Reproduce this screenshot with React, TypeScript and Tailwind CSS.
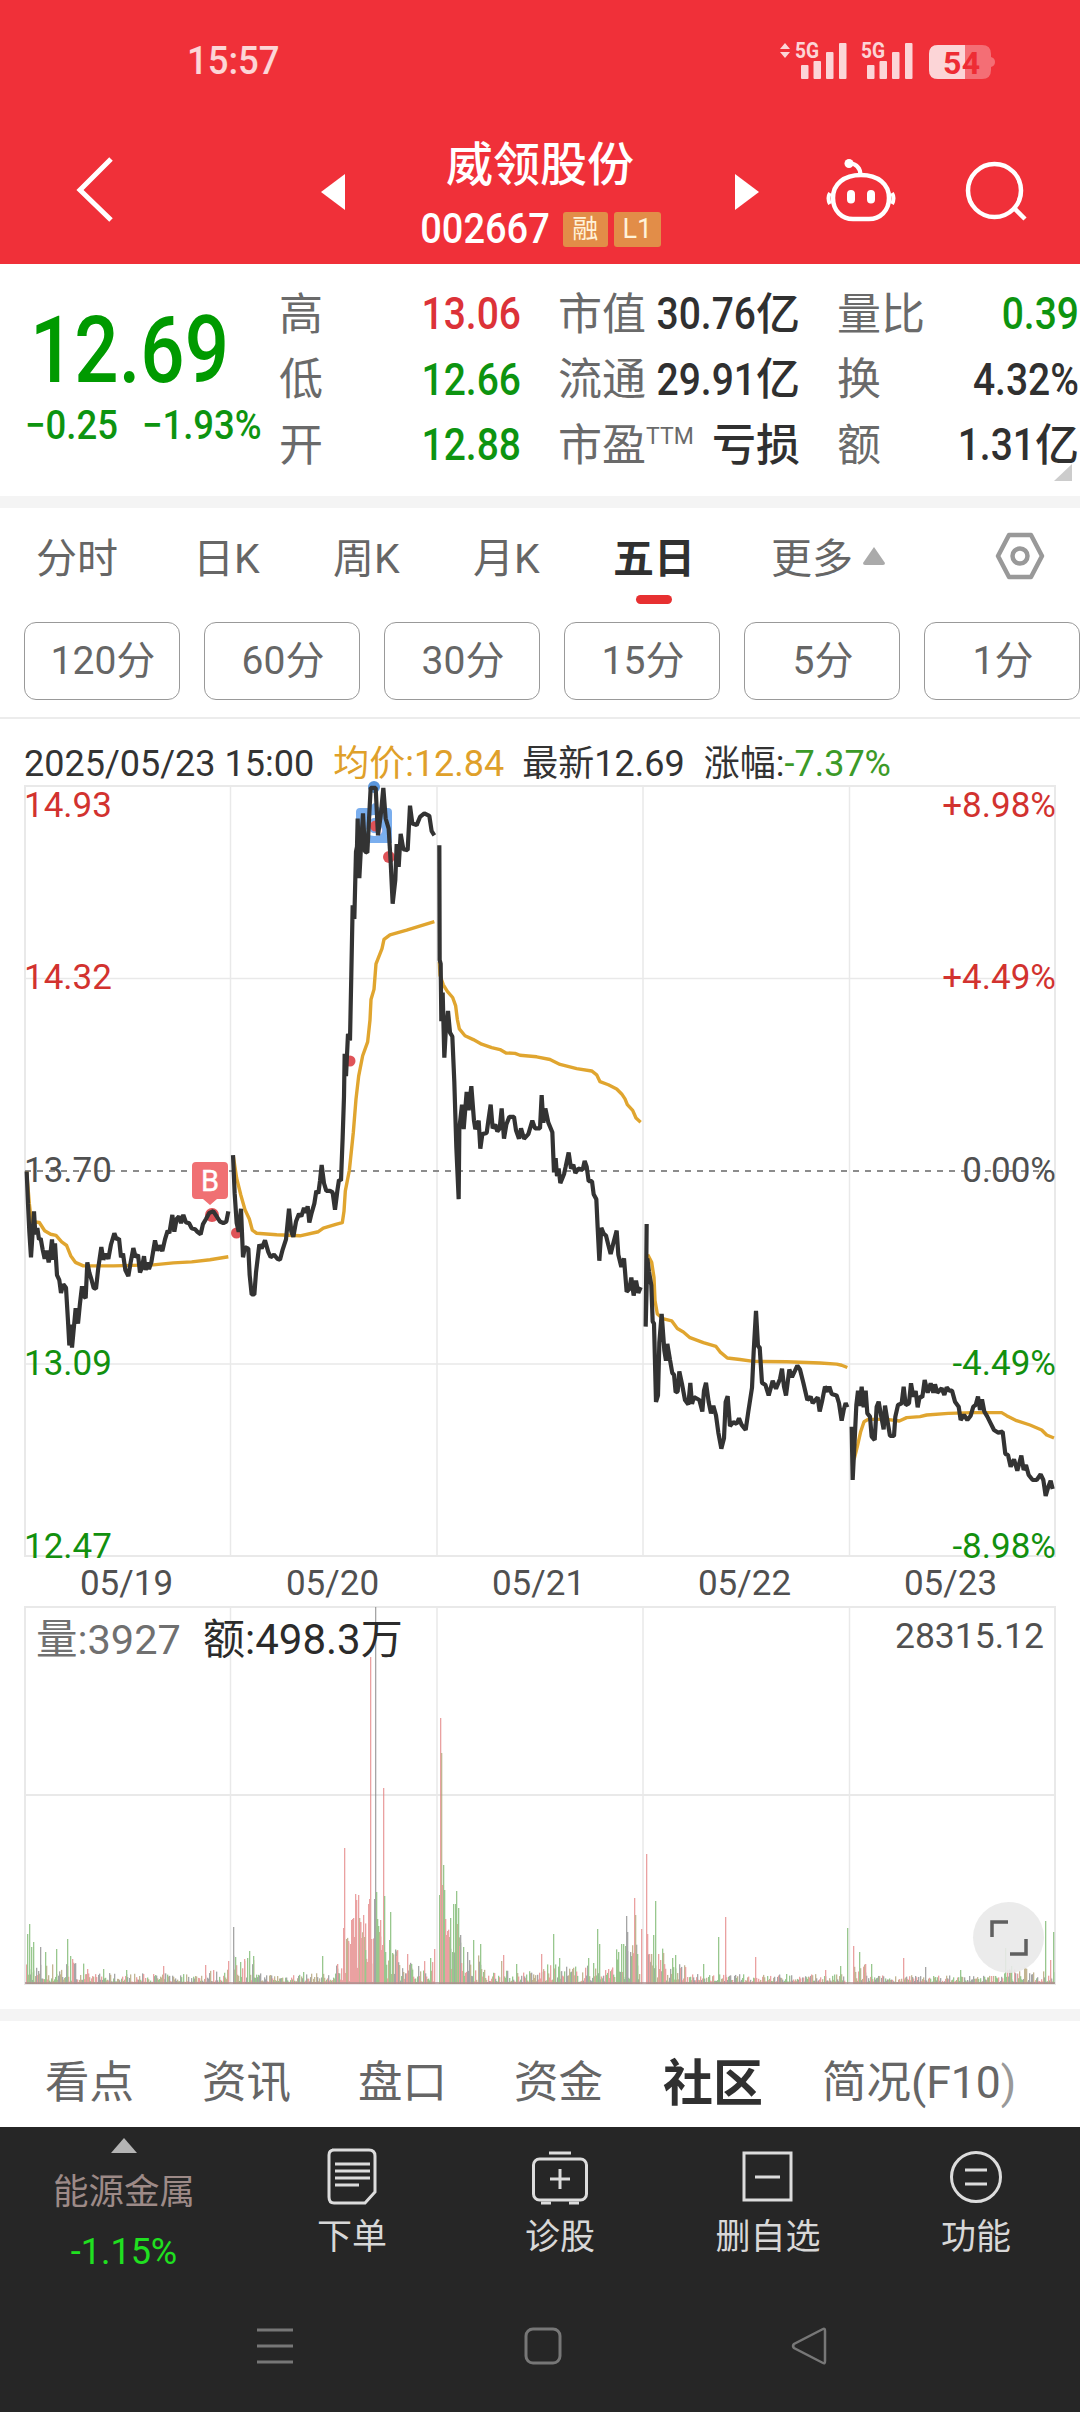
import { clsx } from "clsx";

const LINE = "#333333";
const AVG = "#e0a52f";
const GRID = "#e9e9e9";

const quoteColumns = [
  [
    { label: "高", value: "13.06", tone: "text-[#dc3238]" },
    { label: "低", value: "12.66", tone: "text-[#0d9410]" },
    { label: "开", value: "12.88", tone: "text-[#0d9410]" },
  ],
  [
    { label: "市值", value: "30.76", unit: "亿", tone: "text-[#303030]" },
    { label: "流通", value: "29.91", unit: "亿", tone: "text-[#303030]" },
    { label: "市盈", sup: "TTM", unit: "亏损", tone: "text-[#303030]" },
  ],
  [
    { label: "量比", value: "0.39", tone: "text-[#0d9410]" },
    { label: "换", value: "4.32%", tone: "text-[#303030]" },
    { label: "额", value: "1.31", unit: "亿", tone: "text-[#303030]" },
  ],
];

const minutes = ["120分", "60分", "30分", "15分", "5分", "1分"];

// one entry per session: price and average line in the session's own units
const sessions = [
  {
    transform: "translate(0 770) scale(0.33333 0.5102)",
    price:
      "80,787 84,850 88,905 93,955 97,915 102,865 106,910 112,898 117,920 122,918 128,940 134,958 140,942 146,965 151,950 156,920 160,960 165,928 171,990 178,1000 183,1025 190,1008 198,1015 204,1080 208,1128 213,1087 216,1132 222,1090 227,1055 234,1085 240,1045 246,1012 250,1030 257,1035 262,965 268,985 275,1000 281,1015 288,1017 295,975 304,935 310,960 317,948 325,958 333,930 343,908 350,920 357,918 363,955 369,948 376,980 385,992 392,965 400,937 407,955 414,950 420,985 426,975 432,953 437,980 442,965 447,978 454,965 465,922 472,942 479,932 487,943 495,920 503,903 508,908 517,872 523,905 530,880 537,875 543,888 550,872 558,887 567,888 575,898 585,900 592,905 602,910 609,890 618,880 628,868 640,865 650,875 660,885 670,888 679,885 685,865",
    avg: "80,787 88,850 94,885 118,887 134,903 152,910 168,912 185,925 200,932 212,952 226,965 250,972 340,972 460,970 520,966 575,964 630,960 685,954",
  },
  {
    transform: "translate(0 770) scale(0.33333 0.5102)",
    price:
      "699,755 704,830 710,888 716,905 723,860 729,955 735,935 745,938 749,990 755,1028 763,1028 768,985 778,930 785,938 795,922 805,945 812,955 822,950 832,958 840,960 848,940 858,920 867,860 874,905 880,915 888,885 897,870 904,875 912,858 918,868 923,855 928,887 935,868 943,850 949,825 955,830 960,805 965,774 972,810 979,825 990,825 998,828 1005,862 1012,825 1017,803 1023,805 1028,720 1032,640 1034,556 1038,600 1044,517 1050,530 1054,400 1058,265 1063,292 1068,160 1071,150 1073,95 1078,212 1083,150 1089,85 1095,160 1102,162 1108,85 1112,35 1127,35 1134,128 1142,90 1150,35 1157,95 1166,115 1172,180 1178,262 1186,215 1190,145 1196,190 1202,125 1210,155 1223,157 1230,70 1237,105 1250,108 1260,92 1273,85 1288,90 1295,120 1303,128",
    avg: "700,757 710,800 722,832 735,862 748,880 757,902 770,908 830,911 900,913 955,905 970,898 1010,890 1027,887 1032,865 1036,825 1048,785 1060,710 1068,645 1076,600 1088,560 1103,533 1110,490 1113,450 1122,430 1128,380 1146,350 1152,332 1170,323 1220,314 1303,297",
  },
  {
    transform: "translate(420 960) scale(0.33333 0.38265)",
    price:
      "58,-300 59,0 62,10 64,160 68,85 73,255 77,190 84,133 90,190 97,200 103,320 109,490 116,625 118,440 126,378 131,442 140,345 146,393 154,330 162,420 166,442 176,420 181,493 187,455 200,452 205,420 212,378 218,440 226,430 232,448 239,440 245,388 252,467 259,430 268,410 282,410 288,445 297,467 303,440 312,467 325,455 337,420 345,440 360,440 365,353 370,425 376,388 385,425 397,450 402,555 407,518 411,565 416,545 421,583 432,560 437,540 446,503 453,545 460,535 466,557 475,545 488,548 494,525 500,540 506,578 516,578 521,612 529,625 533,700 538,786 544,700 551,715 558,720 565,745 572,768 580,740 590,707 595,770 604,802 612,780 620,867 628,860 634,830 641,877 648,838 655,870 662,855",
    avg: "58,5 60,40 70,65 82,82 98,98 107,120 112,155 118,180 135,198 160,208 185,220 215,229 240,234 258,243 285,244 300,249 350,253 390,260 420,273 470,284 515,290 530,300 540,318 565,326 590,337 605,350 615,363 622,378 638,393 648,413 662,424",
  },
  {
    transform: "translate(420 960) scale(0.33333 0.38265)",
    price:
      "680,690 677,958 682,780 687,815 694,850 698,945 702,950 708,1155 714,1138 718,1000 725,925 733,1020 738,1047 742,1003 750,1045 757,1080 762,1083 767,1130 773,1128 778,1075 786,1108 795,1150 805,1162 811,1105 816,1160 822,1142 838,1150 847,1180 852,1125 858,1105 866,1155 873,1185 880,1165 888,1190 895,1235 904,1277 912,1250 917,1155 923,1140 930,1218 940,1208 950,1212 957,1198 965,1215 977,1228 985,1180 996,1118 1001,1025 1008,917 1014,1010 1019,1012 1026,1105 1036,1110 1046,1138 1058,1100 1068,1120 1080,1095 1086,1068 1092,1115 1098,1138 1108,1070 1116,1090 1132,1060 1140,1070 1150,1105 1162,1150 1172,1141 1178,1158 1193,1143 1199,1180 1206,1154 1215,1115 1224,1128 1228,1115 1235,1134 1250,1138 1257,1158 1265,1204 1271,1176 1277,1158 1282,1169",
    avg: "683,770 695,790 702,830 705,890 712,925 728,937 755,943 772,963 790,972 810,987 850,1000 888,1010 900,1024 922,1040 960,1044 1000,1049 1100,1050 1200,1053 1250,1056 1265,1059 1282,1065",
  },
  {
    transform: "translate(740 1150) scale(0.33333)",
    price:
      "335,830 338,990 345,850 349,765 354,722 359,768 365,710 371,772 377,722 382,790 390,800 395,860 404,870 410,770 416,755 422,790 431,838 435,767 442,810 450,858 462,858 466,800 474,765 485,760 491,710 497,765 507,760 513,700 520,740 527,723 533,772 539,740 547,742 554,690 563,728 572,700 580,728 585,703 592,728 605,715 613,735 620,712 628,722 636,722 645,755 656,770 662,810 672,795 682,810 692,797 700,770 707,765 714,740 720,780 726,748 733,785 742,800 752,820 762,840 775,848 788,845 796,912 804,915 812,950 822,928 832,962 844,917 851,960 858,945 866,975 878,990 890,990 902,973 910,990 917,1038 925,1010 932,992 938,1017",
    avg: "335,835 343,925 352,890 362,845 372,815 385,808 440,808 478,813 500,803 540,800 560,795 625,790 700,788 785,788 800,797 830,812 870,825 905,840 920,855 942,864",
  },
];

const priceLabels = [
  { y: 817, left: "14.93", right: "+8.98%", fill: "#d2322f" },
  { y: 989, left: "14.32", right: "+4.49%", fill: "#d2322f" },
  { y: 1182, left: "13.70", right: "0.00%", fill: "#505050" },
  { y: 1375, left: "13.09", right: "-4.49%", fill: "#12900f" },
  { y: 1558, left: "12.47", right: "-8.98%", fill: "#12900f" },
];

const dates = ["05/19", "05/20", "05/21", "05/22", "05/23"];
const gridX = [25, 230.5, 437, 643, 849.5, 1055];

const barColors: Record<string, string> = {
  r: "#e58a8a",
  g: "#7fba72",
  k: "#8f8f8f",
  o: "#b3a377",
};

// x, height, colour key
const peaks: [number, number, string][] = [
  [27, 50, "g"], [29, 60, "g"], [31, 37, "g"], [33, 42, "g"], [40, 37, "k"], [45, 32, "g"], [56, 35, "g"],
  [67, 45, "g"], [70, 28, "g"], [72, 25, "r"], [87, 15, "r"], [103, 15, "g"], [126, 14, "g"], [163, 18, "r"],
  [205, 19, "r"], [228, 23, "r"], [233, 57, "k"], [235, 27, "g"], [240, 22, "g"], [244, 25, "r"], [249, 33, "g"],
  [253, 28, "g"], [303, 12, "g"], [322, 28, "g"], [337, 20, "r"], [343, 56, "r"], [344, 136, "r"], [346, 45, "o"],
  [348, 43, "r"], [350, 40, "r"], [351, 64, "r"], [352, 65, "r"], [353, 66, "r"], [354, 47, "r"], [355, 90, "r"],
  [356, 84, "r"], [358, 89, "r"], [359, 66, "o"], [360, 62, "r"], [361, 46, "r"], [363, 69, "r"], [364, 47, "o"],
  [365, 34, "g"], [367, 22, "r"], [368, 80, "r"], [369, 85, "r"], [370, 327, "r"], [371, 45, "r"], [374, 85, "k"],
  [375, 377, "k"], [376, 92, "g"], [377, 65, "g"], [378, 58, "g"], [379, 52, "o"], [380, 64, "r"], [382, 39, "r"],
  [383, 196, "r"], [384, 88, "g"], [385, 32, "g"], [389, 44, "g"], [390, 72, "g"], [392, 31, "g"], [395, 34, "k"],
  [396, 28, "r"], [407, 30, "r"], [411, 20, "g"], [430, 26, "g"], [434, 35, "r"], [439, 89, "g"], [440, 266, "r"],
  [441, 231, "o"], [442, 99, "r"], [443, 119, "g"], [444, 94, "g"], [445, 65, "r"], [446, 49, "r"], [447, 53, "r"],
  [449, 47, "o"], [450, 66, "g"], [452, 32, "g"], [453, 80, "g"], [455, 80, "g"], [456, 93, "g"], [457, 60, "o"],
  [458, 76, "g"], [459, 38, "r"], [460, 49, "k"], [461, 21, "r"], [463, 37, "g"], [467, 32, "k"], [473, 44, "g"],
  [480, 40, "g"], [501, 23, "o"], [503, 29, "r"], [516, 20, "g"], [541, 30, "r"], [553, 50, "g"], [559, 26, "g"],
  [588, 26, "g"], [593, 21, "g"], [597, 55, "g"], [599, 40, "g"], [608, 15, "r"], [618, 32, "g"], [621, 40, "g"],
  [623, 40, "g"], [625, 38, "g"], [626, 68, "k"], [627, 52, "k"], [630, 32, "k"], [634, 86, "r"], [635, 69, "o"],
  [637, 30, "g"], [641, 55, "r"], [646, 130, "r"], [647, 50, "r"], [649, 30, "r"], [651, 30, "o"], [653, 49, "g"],
  [655, 83, "g"], [658, 30, "r"], [660, 24, "r"], [672, 26, "g"], [675, 29, "g"], [703, 20, "g"], [718, 47, "g"],
  [725, 67, "r"], [755, 27, "r"], [786, 10, "g"], [825, 14, "r"], [840, 18, "g"], [847, 56, "g"], [853, 38, "r"],
  [859, 32, "g"], [865, 20, "r"], [871, 20, "g"], [903, 26, "r"], [925, 17, "k"], [960, 14, "g"], [1005, 36, "g"],
  [1011, 18, "g"], [1045, 63, "g"], [1050, 24, "r"], [1053, 52, "g"],
];

// from, to, amplitude
const zones: [number, number, number][] = [
  [26, 56, 20], [56, 84, 22], [84, 200, 9], [200, 228, 13], [233, 256, 28], [256, 335, 9], [335, 343, 18],
  [343, 385, 60], [385, 400, 34], [400, 434, 22], [439, 461, 60], [461, 485, 28], [485, 540, 12], [540, 575, 18],
  [575, 615, 17], [615, 640, 38], [646, 664, 38], [664, 692, 19], [692, 845, 8], [853, 866, 20], [866, 1000, 7],
  [1000, 1054, 15],
];

function buildVolume() {
  let seed = 7;
  const rand = () => {
    seed = (seed * 16807) % 2147483647;
    return seed / 2147483647;
  };
  const bars: [number, number, string][] = [];
  zones.forEach(([from, to, amp]) => {
    for (let x = from; x < to; x += 1) {
      const key = amp > 45 && x < 400 ? (rand() > 0.25 ? "r" : "o") : "rgok"[Math.floor(rand() * 4)];
      bars.push([x, 2 + amp * rand() ** 1.6, key]);
    }
  });
  return bars.concat(peaks);
}

const volume = buildVolume();

const tools = [
  {
    label: "下单",
    icon: (
      <>
        <path d="M8 4H45Q51 4 51 10V46L41 57H10Q5 57 5 51V9Q5 4 10 4Z" />
        <path d="M11 18H46M11 25H46M11 32H46M11 39H35" />
      </>
    ),
  },
  {
    label: "诊股",
    icon: (
      <>
        <rect x="1.5" y="13" width="53" height="41" rx="6" />
        <path d="M17 7H39M28 23V43M18 33H38M9 57H19M37 57H47" />
      </>
    ),
  },
  {
    label: "删自选",
    icon: (
      <>
        <rect x="4" y="7" width="47" height="47" />
        <path d="M15 31H40" />
      </>
    ),
  },
  {
    label: "功能",
    icon: (
      <>
        <circle cx="28" cy="31" r="24.5" />
        <path d="M17 24H39M17 38H39" />
      </>
    ),
  },
];

function Signal({ arrows }: { arrows?: boolean }) {
  return (
    <svg width="68" height="42" viewBox="0 0 68 42" fill="white">
      {arrows && <path d="M0 10L5 4L10 10ZM0 13L5 19L10 13Z" />}
      <text x="15" y="19" fontSize="22" fontWeight="700" textLength="24" lengthAdjust="spacingAndGlyphs">
        5G
      </text>
      <rect x="21" y="26" width="7.5" height="14" rx="1" />
      <rect x="33.5" y="22" width="7.5" height="18" rx="1" />
      <rect x="46" y="13" width="7.5" height="27" rx="1" />
      <rect x="59" y="4" width="7.5" height="36" rx="1" />
    </svg>
  );
}

function StatusBar() {
  return (
    <div className="flex h-[124px] justify-between pr-[84px] pl-[187px] text-white/80">
      <span className="mt-[42px] origin-center scale-y-105 text-[36.5px] leading-[40px] font-medium">15:57</span>
      <div className="mt-[39px] flex h-[42px] opacity-80">
        <Signal arrows />
        <div className="-ml-[2px]">
          <Signal />
        </div>
        <svg className="ml-[15px]" width="67" height="42" viewBox="0 0 67 42">
          <path d="M9 6H53Q62 6 62 15V18Q66 19 66 23Q66 27 62 28V31Q62 40 53 40H9Q0 40 0 31V15Q0 6 9 6Z" fill="white" fillOpacity="0.38" />
          <path d="M9 6H36V40H9Q0 40 0 31V15Q0 6 9 6Z" fill="white" />
          <text x="14" y="34.5" fontSize="32" fontWeight="700" fill="#ee2c34" textLength="37">
            54
          </text>
        </svg>
      </div>
    </div>
  );
}

function TitleBar() {
  return (
    <div className="flex h-[140px] items-start text-white">
      <svg className="mt-[32px] ml-[76px] shrink-0" width="40" height="68" viewBox="0 0 40 68" fill="none" stroke="white" strokeWidth="5">
        <path d="M35 3L4 34L35 64" />
      </svg>
      <svg className="mt-[50px] ml-[205px] shrink-0" width="24" height="36" viewBox="0 0 24 36" fill="white">
        <path d="M24 0V36L0 18Z" />
      </svg>
      <div className="flex w-[390px] shrink-0 flex-col items-center">
        <h1 className="mt-[12px] text-[47px] leading-[58px] font-medium">威领股份</h1>
        <div className="mt-[13px] flex items-center pl-[1px]">
          <span className="scale-y-110 text-[38px] leading-[44px] font-medium">002667</span>
          <span className="ml-[13px] flex h-[35px] w-[45px] items-center justify-center rounded-[3px] bg-[#e28d48] text-[26px] text-[#fff2d8]">融</span>
          <span className="ml-[6px] flex h-[35px] w-[47px] items-center justify-center rounded-[3px] bg-[#e28d48] text-[27px] text-[#fff2d8]">L1</span>
        </div>
      </div>
      <svg className="mt-[50px] shrink-0" width="24" height="36" viewBox="0 0 24 36" fill="white">
        <path d="M0 0L24 18L0 36Z" />
      </svg>
      <svg className="mt-[33px] ml-[67px] shrink-0" width="72" height="68" viewBox="0 0 72 68" fill="none" stroke="white" strokeWidth="4.5">
        <path d="M34.500 18Q34.500 8 24 6" strokeWidth="4" />
        <circle cx="23" cy="6.500" r="4.500" fill="white" stroke="none" />
        <path d="M35 18C52 18 63 27 63 41C63 54 54 62 43 62H27C16 62 7 54 7 41C7 27 18 18 35 18Z" />
        <path d="M4 36Q1 41 4 47M66 36Q69 41 66 47" strokeWidth="4" />
        <path d="M25 37V42.500M45 37V42.500" strokeWidth="8" strokeLinecap="round" />
      </svg>
      <svg className="mt-[35px] ml-[67px] shrink-0" width="66" height="66" viewBox="0 0 66 66" fill="none" stroke="white" strokeWidth="4.5">
        <circle cx="29.500" cy="31.500" r="26.500" />
        <path d="M49 49L60 60" />
      </svg>
    </div>
  );
}

function Quote() {
  return (
    <section className="relative flex h-[232px] overflow-hidden">
      <div className="w-[279px] shrink-0 text-[#0d9410]">
        <div className="mt-[51px] ml-[30px] h-[72px] origin-center scale-y-[1.19] text-[78px] leading-[72px] font-medium text-[#009a00]">12.69</div>
        <div className="mt-[18px] ml-[25px] flex gap-[24px] text-[36.5px] leading-[42px] font-medium whitespace-nowrap">
          <span className="scale-y-110">−0.25</span>
          <span className="scale-y-110">−1.93%</span>
        </div>
      </div>
      <div className="flex gap-[37px] pt-[18px]">
        {quoteColumns.map((rows, i) => (
          <div key={i} className="w-[242px]">
            {rows.map((row) => (
              <div key={row.label} className="flex h-[65.5px] items-center justify-between text-[44px] leading-none whitespace-nowrap">
                <span className="flex text-[#6a6a6a]">
                  {row.label}
                  {"sup" in row && <span className="mt-[1px] text-[23px] leading-none">{row.sup}</span>}
                </span>
                <span className={clsx("flex items-center font-medium", row.tone)}>
                  {"value" in row && <span className="scale-y-[1.16] text-[39px]">{row.value}</span>}
                  {"unit" in row && row.unit}
                </span>
              </div>
            ))}
          </div>
        ))}
      </div>
      <svg className="absolute right-[8px] bottom-[15px]" width="18" height="17" viewBox="0 0 18 17" fill="#cccccc">
        <path d="M18 0V17H0Z" />
      </svg>
    </section>
  );
}

function PeriodTabs() {
  return (
    <nav className="relative flex h-[114px] pt-[22px] text-[41px] leading-[58px] whitespace-nowrap text-[#666]">
      <span className="w-[157px] pl-[36px]">分时</span>
      <span className="w-[140px] pl-[36px]">日K</span>
      <span className="w-[140px] pl-[36px]">周K</span>
      <span className="w-[140px] pl-[36px]">月K</span>
      <span className="w-[158px] pl-[36px] font-bold text-[#303030]">
        五日
        <i className="mt-[7px] ml-[23px] block h-[9px] w-[36px] rounded-full bg-[#e73031]" />
      </span>
      <span className="flex w-[260px] pl-[36px]">
        更多
        <svg className="mt-[16px] ml-[9px]" width="24" height="20" viewBox="0 0 24 20" fill="#aaaaaa">
          <path d="M12 1L23 17Q23 19 21 19H3Q1 19 1 17Z" />
        </svg>
      </span>
      <svg className="mt-[2px]" width="50" height="48" viewBox="0 0 50 48" fill="none" stroke="#999" strokeWidth="4.5">
        <path d="M14 3H36L47 24L36 45H14L3 24Z" strokeLinejoin="round" />
        <circle cx="25" cy="24" r="7.5" />
      </svg>
    </nav>
  );
}

function PriceChart() {
  return (
    <svg className="block overflow-visible" width="1080" height="821" viewBox="0 785 1080 821" fontSize="35">
      <g stroke={GRID} strokeWidth="2" fill="none">
        <rect x="25" y="786" width="1030" height="770" />
        <path d="M25 978.5H1055M25 1364H1055" strokeWidth="1.5" />
        {gridX.slice(1, 5).map((x) => (
          <path key={x} d={`M${x} 786V1556`} strokeWidth="1.5" />
        ))}
      </g>
      <path d="M25 1171H1055" stroke="#8c8c8c" strokeWidth="2" strokeDasharray="6 6" />

      <path d="M360 808H368L374 803L380 808H388Q392 808 392 812V843H356V812Q356 808 360 808Z" fill="#7aaeee" />
      <text x="374" y="836" fontSize="29" fontWeight="500" fill="white" textAnchor="middle">
        S
      </text>
      <circle cx="374" cy="787" r="6" fill="#5a96dc" />
      <g fill="#df5358">
        <circle cx="375.5" cy="826" r="5.5" />
        <circle cx="389" cy="857" r="6" />
        <circle cx="350" cy="1061" r="5.5" />
        <circle cx="212" cy="1215" r="7" />
        <circle cx="236.5" cy="1233" r="5.5" />
      </g>

      <g fill="none">
        {sessions.map((s, i) => (
          <g key={i} transform={s.transform}>
            <polyline points={s.avg} stroke={AVG} strokeWidth="3.4" vectorEffect="non-scaling-stroke" strokeLinejoin="round" />
            <polyline points={s.price} stroke={LINE} strokeWidth="4.2" vectorEffect="non-scaling-stroke" strokeLinejoin="bevel" />
          </g>
        ))}
      </g>

      <path d="M196 1162H224Q228 1162 228 1166V1195Q228 1199 224 1199H217L210 1205L203 1199H196Q192 1199 192 1195V1166Q192 1162 196 1162Z" fill="#f07073" />
      <text x="210" y="1191" fontSize="29" fill="white" stroke="white" strokeWidth="0.4" textAnchor="middle">
        B
      </text>

      {priceLabels.map((l) => (
        <g key={l.left} fill={l.fill}>
          <text x="24" y={l.y}>
            {l.left}
          </text>
          <text x="1056" y={l.y} textAnchor="end">
            {l.right}
          </text>
        </g>
      ))}
      {dates.map((d, i) => (
        <text key={d} x={126.5 + i * 206} y="1595" textAnchor="middle" fill="#505050">
          {d}
        </text>
      ))}
    </svg>
  );
}

function VolumeChart() {
  return (
    <div className="relative">
      <svg className="block" width="1080" height="380" viewBox="0 1606 1080 380">
        <g stroke={GRID} strokeWidth="2" fill="none">
          <rect x="25" y="1607" width="1030" height="377" />
          <path d="M25 1795H1055" />
          {gridX.slice(1, 5).map((x) => (
            <path key={x} d={`M${x} 1607V1984`} strokeWidth="1.5" />
          ))}
        </g>
        <g opacity="0.8">
          {volume.map(([x, h, key], i) => (
            <rect key={i} x={x} y={1984 - h} width="1.3" height={h} fill={barColors[key]} />
          ))}
          <path d="M25 1983H1055" stroke="#9a7474" strokeWidth="1.5" />
        </g>
        <text x="36" y="1653.5" fontSize="41.5" fill="#707070">
          量:3927
        </text>
        <text x="203" y="1653.5" fontSize="42" fill="#2b2b2b">
          额:498.3万
        </text>
        <text x="1044" y="1647.5" fontSize="35.500" fill="#505050" textAnchor="end">
          28315.12
        </text>
      </svg>
      <button className="absolute right-[36px] bottom-[13px] flex size-[71px] items-center justify-center rounded-full bg-[#e9e9e9]/90">
        <svg width="38" height="38" viewBox="0 0 38 38" fill="none" stroke="#606060" strokeWidth="3.5">
          <path d="M2 18V3H18M36 20V35H20" />
        </svg>
      </button>
    </div>
  );
}

function BottomBar() {
  return (
    <footer className="h-[285px] bg-[#262626]">
      <div className="flex h-[173px] text-[35px] leading-[40px] text-[#d8d8d8]">
        <div className="flex w-[248px] flex-col items-center">
          <svg className="mt-[11px]" width="26" height="15" viewBox="0 0 26 15" fill="#b4b4b4">
            <path d="M13 0L26 15H0Z" />
          </svg>
          <span className="mt-[19px] text-[35.5px] text-[#9d8a87]">能源金属</span>
          <span className="mt-[20px] text-[36px] text-[#20e020]">-1.15%</span>
        </div>
        {tools.map((t) => (
          <div key={t.label} className="flex w-[208px] flex-col items-center">
            <svg className="mt-[19px]" width="56" height="60" viewBox="0 0 56 60" fill="none" stroke="#dcdcdc" strokeWidth="3">
              {t.icon}
            </svg>
            <span className="mt-[12px]">{t.label}</span>
          </div>
        ))}
      </div>
      <div className="mt-[26px] flex items-center pl-[256px]">
        <svg width="38" height="40" viewBox="0 0 38 40" stroke="#777" strokeWidth="3">
          <path d="M1 4H37M1 20H37M1 36H37" />
        </svg>
        <svg className="ml-[230px]" width="38" height="40" viewBox="0 0 38 40" fill="none" stroke="#777" strokeWidth="3">
          <rect x="2" y="3" width="34" height="34" rx="7" />
        </svg>
        <svg className="ml-[228px]" width="38" height="40" viewBox="0 0 38 40" fill="none" stroke="#777" strokeWidth="2.5">
          <path d="M33 3Q35 2 35 5V35Q35 38 33 37L4 22Q2 20 4 18Z" />
        </svg>
      </div>
    </footer>
  );
}

export default function App() {
  return (
    <main className="h-[2412px] w-[1080px] overflow-hidden bg-white font-['Roboto','Noto_Sans_CJK_SC',sans-serif]">
      <header className="bg-[#f03039]">
        <StatusBar />
        <TitleBar />
      </header>
      <Quote />
      <div className="h-[12px] bg-[#f4f4f4]" />
      <PeriodTabs />
      <div className="flex h-[97px] gap-[24px] border-b-2 border-[#ececec] pl-[24px]">
        {minutes.map((m) => (
          <span key={m} className="flex h-[78px] w-[156px] shrink-0 items-center justify-center rounded-[12px] border border-[#999] pl-[2px] text-[39px] text-[#666]">
            {m}
          </span>
        ))}
      </div>
      <div className="flex h-[66px] items-center pt-[23px] pl-[24px] text-[36px] leading-[42px] whitespace-nowrap text-[#333]">
        <span>2025/05/23 15:00</span>
        <span className="ml-[19px] text-[#dfa02a]">均价:12.84</span>
        <span className="ml-[18px]">最新12.69</span>
        <span className="ml-[19px]">涨幅:</span>
        <span className="text-[#3c9a28]">-7.37%</span>
      </div>
      <PriceChart />
      <VolumeChart />
      <div className="mt-[23px] h-[12px] bg-[#f4f4f4]" />
      <nav className="flex h-[106px] items-center pt-[19px] text-[44.5px] leading-none whitespace-nowrap text-[#666]">
        <span className="w-[157px] pl-[45px]">看点</span>
        <span className="w-[156px] pl-[45px]">资讯</span>
        <span className="w-[156px] pl-[45px]">盘口</span>
        <span className="w-[156px] pl-[45px]">资金</span>
        <span className="w-[153px] pl-[38px] text-[50px] font-bold text-[#303030]">社区</span>
        <span className="pl-[44px]">
          简况(F10<span className="text-[#999]">)</span>
        </span>
      </nav>
      <BottomBar />
    </main>
  );
}
